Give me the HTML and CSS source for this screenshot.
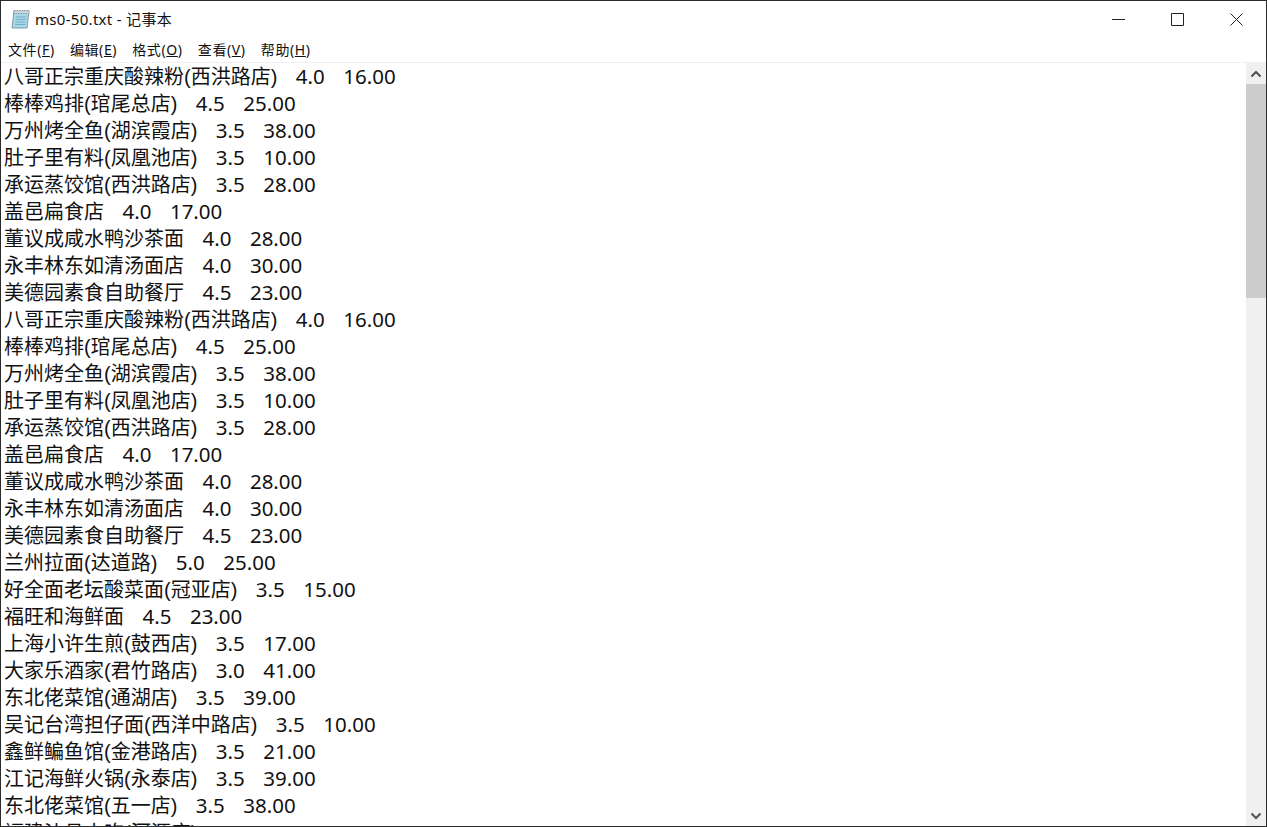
FILE: index.html
```html
<!DOCTYPE html>
<html lang="zh-CN">
<head>
<meta charset="utf-8">
<title>ms0-50.txt - 记事本</title>
<link rel="stylesheet" href="styles.css">
</head>
<body>
<div class="window">
  <header class="titlebar">
    <svg class="app-icon" width="22" height="22" viewBox="0 0 22 22">
      <path d="M4 3h15l-2 17H2z" fill="#a6d8e8" stroke="#7f9aa8"/>
      <path d="M4 2.500h15v3H4z" fill="#c9d6dc" stroke="#8a9aa3" stroke-dasharray="1.500 1"/>
      <path d="M6 9h10M5.700 11.500h10M5.400 14h10M5.100 16.500h10" stroke="#74adc4" fill="none"/>
    </svg>
    <span class="title">ms0-50.txt - 记事本</span>
    <div class="controls">
      <div class="ctl"><svg width="13" height="13" viewBox="0 0 13 13"><path d="M0 6.500h13" stroke="#222" fill="none"/></svg></div>
      <div class="ctl"><svg width="13" height="13" viewBox="0 0 13 13"><path d="M.5.500h12v12H.5z" stroke="#222" fill="none"/></svg></div>
      <div class="ctl"><svg width="13" height="13" viewBox="0 0 13 13"><path d="M.5.500l12 12M12.500.500l-12 12" stroke="#222" fill="none"/></svg></div>
    </div>
  </header>
  <nav class="menubar">
    <span class="menu">文件(<u>F</u>)</span>
    <span class="menu">编辑(<u>E</u>)</span>
    <span class="menu">格式(<u>O</u>)</span>
    <span class="menu">查看(<u>V</u>)</span>
    <span class="menu">帮助(<u>H</u>)</span>
  </nav>
  <main class="client">
    <div class="text">
      <div class="line">八哥正宗重庆酸辣粉(西洪路店)   <span class="num">4.0</span>   <span class="num">16.00</span></div>
      <div class="line">棒棒鸡排(琯尾总店)   <span class="num">4.5</span>   <span class="num">25.00</span></div>
      <div class="line">万州烤全鱼(湖滨霞店)   <span class="num">3.5</span>   <span class="num">38.00</span></div>
      <div class="line">肚子里有料(凤凰池店)   <span class="num">3.5</span>   <span class="num">10.00</span></div>
      <div class="line">承运蒸饺馆(西洪路店)   <span class="num">3.5</span>   <span class="num">28.00</span></div>
      <div class="line">盖邑扁食店   <span class="num">4.0</span>   <span class="num">17.00</span></div>
      <div class="line">董议成咸水鸭沙茶面   <span class="num">4.0</span>   <span class="num">28.00</span></div>
      <div class="line">永丰林东如清汤面店   <span class="num">4.0</span>   <span class="num">30.00</span></div>
      <div class="line">美德园素食自助餐厅   <span class="num">4.5</span>   <span class="num">23.00</span></div>
      <div class="line">八哥正宗重庆酸辣粉(西洪路店)   <span class="num">4.0</span>   <span class="num">16.00</span></div>
      <div class="line">棒棒鸡排(琯尾总店)   <span class="num">4.5</span>   <span class="num">25.00</span></div>
      <div class="line">万州烤全鱼(湖滨霞店)   <span class="num">3.5</span>   <span class="num">38.00</span></div>
      <div class="line">肚子里有料(凤凰池店)   <span class="num">3.5</span>   <span class="num">10.00</span></div>
      <div class="line">承运蒸饺馆(西洪路店)   <span class="num">3.5</span>   <span class="num">28.00</span></div>
      <div class="line">盖邑扁食店   <span class="num">4.0</span>   <span class="num">17.00</span></div>
      <div class="line">董议成咸水鸭沙茶面   <span class="num">4.0</span>   <span class="num">28.00</span></div>
      <div class="line">永丰林东如清汤面店   <span class="num">4.0</span>   <span class="num">30.00</span></div>
      <div class="line">美德园素食自助餐厅   <span class="num">4.5</span>   <span class="num">23.00</span></div>
      <div class="line">兰州拉面(达道路)   <span class="num">5.0</span>   <span class="num">25.00</span></div>
      <div class="line">好全面老坛酸菜面(冠亚店)   <span class="num">3.5</span>   <span class="num">15.00</span></div>
      <div class="line">福旺和海鲜面   <span class="num">4.5</span>   <span class="num">23.00</span></div>
      <div class="line">上海小许生煎(鼓西店)   <span class="num">3.5</span>   <span class="num">17.00</span></div>
      <div class="line">大家乐酒家(君竹路店)   <span class="num">3.0</span>   <span class="num">41.00</span></div>
      <div class="line">东北佬菜馆(通湖店)   <span class="num">3.5</span>   <span class="num">39.00</span></div>
      <div class="line">吴记台湾担仔面(西洋中路店)   <span class="num">3.5</span>   <span class="num">10.00</span></div>
      <div class="line">鑫鲜鳊鱼馆(金港路店)   <span class="num">3.5</span>   <span class="num">21.00</span></div>
      <div class="line">江记海鲜火锅(永泰店)   <span class="num">3.5</span>   <span class="num">39.00</span></div>
      <div class="line">东北佬菜馆(五一店)   <span class="num">3.5</span>   <span class="num">38.00</span></div>
      <div class="line">福建沙县小吃(河源店)   <span class="num">3.5</span>   <span class="num">10.00</span></div>
    </div>
    <aside class="scrollbar">
      <div class="arrow"><svg width="12" height="8" viewBox="0 0 12 8"><path d="M1.500 6.500L6 2l4.500 4.500" stroke="#505050" stroke-width="2" fill="none"/></svg></div>
      <div class="thumb"></div>
      <div class="track"></div>
      <div class="arrow"><svg width="12" height="8" viewBox="0 0 12 8"><path d="M1.500 1.500L6 6l4.500-4.500" stroke="#505050" stroke-width="2" fill="none"/></svg></div>
    </aside>
  </main>
</div>
</body>
</html>
```
FILE: styles.css
```css
* { box-sizing: border-box; }
html, body { margin: 0; height: 100%; overflow: hidden; background: #fff; }
.window {
  width: 1267px;
  height: 827px;
  display: flex;
  flex-direction: column;
  border: 1px solid #2b2b2b;
  background: #fff;
  font-family: "Noto Sans", "Noto Sans CJK SC", sans-serif;
  color: #111;
  overflow: hidden;
}
.titlebar {
  height: 36px;
  flex: none;
  display: flex;
  align-items: center;
  padding-left: 9px;
}
.app-icon { flex: none; margin-right: 3px; }
.title { font-size: 15px; letter-spacing: .3px; padding-bottom: 2px; }
.controls { margin-left: auto; display: flex; }
.ctl {
  width: 59px;
  height: 36px;
  display: flex;
  align-items: center;
  justify-content: center;
}
.menubar {
  height: 26px;
  flex: none;
  display: flex;
  align-items: center;
  gap: 15.2px;
  padding: 0 0 2px 7px;
  font-size: 14px;
  letter-spacing: .6px;
  border-bottom: 1px solid #f0f0f0;
}
.client { flex: 1; min-height: 0; display: flex; }
.text {
  flex: 1;
  min-width: 0;
  overflow: hidden;
  padding-left: 3px;
  font-family: "Liberation Sans", "Noto Sans CJK SC", sans-serif;
  font-size: 20px;
  line-height: 27px;
}
.line { height: 27px; white-space: pre; word-spacing: .6px; }
.num { font-family: "Noto Sans", sans-serif; font-size: 20.5px; }
.scrollbar {
  width: 20px;
  flex: none;
  display: flex;
  flex-direction: column;
  background: #f0f0f0;
}
.arrow {
  height: 21px;
  flex: none;
  display: flex;
  align-items: center;
  justify-content: center;
}
.thumb { height: 214px; flex: none; background: #cdcdcd; }
.track { flex: 1; }
```
